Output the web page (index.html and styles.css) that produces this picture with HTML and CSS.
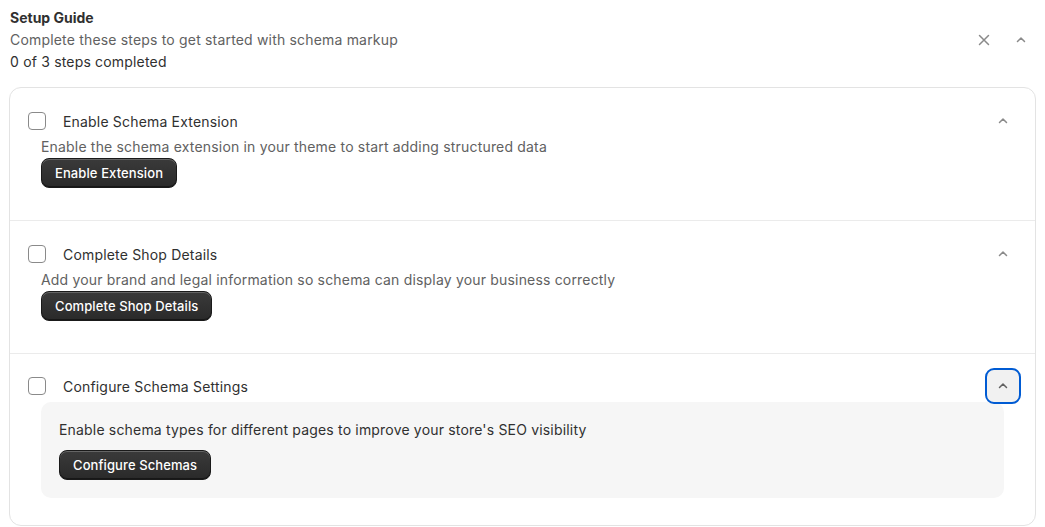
FILE: index.html
```html
<!DOCTYPE html>
<html lang="en">
<head>
    <meta charset="UTF-8">
    <meta name="viewport" content="width=device-width, initial-scale=1.0">
    <title>Setup Guide</title>
    <link rel="stylesheet" href="styles.css">
</head>
<body>
    <div class="guide">
        <div class="guide-head">
            <div class="guide-text">
                <h2 class="guide-title">Setup Guide</h2>
                <p class="guide-sub">Complete these steps to get started with schema markup</p>
                <p class="guide-progress">0 of 3 steps completed</p>
            </div>
            <div class="guide-actions">
                <button class="icon-btn" aria-label="Dismiss">
                    <svg width="20" height="20" viewBox="0 0 20 20"><path d="M5.5 5.5l9 9M14.5 5.5l-9 9" stroke="#8a8a8a" stroke-width="1.5" stroke-linecap="round"/></svg>
                </button>
                <button class="icon-btn" aria-label="Collapse">
                    <svg width="20" height="20" viewBox="0 0 20 20"><path d="M6.5 11.5L10 8l3.5 3.5" fill="none" stroke="#8a8a8a" stroke-width="1.5" stroke-linecap="round" stroke-linejoin="round"/></svg>
                </button>
            </div>
        </div>

        <div class="steps">
            <div class="step">
                <div class="step-head">
                    <span class="check"></span>
                    <span class="step-title">Enable Schema Extension</span>
                    <button class="toggle" aria-label="Collapse step">
                        <svg width="20" height="20" viewBox="0 0 20 20"><path d="M6.5 11.5L10 8l3.5 3.5" fill="none" stroke="#8a8a8a" stroke-width="1.5" stroke-linecap="round" stroke-linejoin="round"/></svg>
                    </button>
                </div>
                <div class="step-body">
                    <p class="step-desc">Enable the schema extension in your theme to start adding structured data</p>
                    <button class="btn-dark">Enable Extension</button>
                </div>
            </div>

            <div class="step">
                <div class="step-head">
                    <span class="check"></span>
                    <span class="step-title">Complete Shop Details</span>
                    <button class="toggle" aria-label="Collapse step">
                        <svg width="20" height="20" viewBox="0 0 20 20"><path d="M6.5 11.5L10 8l3.5 3.5" fill="none" stroke="#8a8a8a" stroke-width="1.5" stroke-linecap="round" stroke-linejoin="round"/></svg>
                    </button>
                </div>
                <div class="step-body">
                    <p class="step-desc">Add your brand and legal information so schema can display your business correctly</p>
                    <button class="btn-dark">Complete Shop Details</button>
                </div>
            </div>

            <div class="step step-last">
                <div class="step-head">
                    <span class="check"></span>
                    <span class="step-title">Configure Schema Settings</span>
                    <button class="toggle toggle-focus" aria-label="Collapse step">
                        <svg width="20" height="20" viewBox="0 0 20 20"><path d="M6.5 11.5L10 8l3.5 3.5" fill="none" stroke="#616161" stroke-width="1.5" stroke-linecap="round" stroke-linejoin="round"/></svg>
                    </button>
                </div>
                <div class="step-panel">
                    <p class="panel-desc">Enable schema types for different pages to improve your store's SEO visibility</p>
                    <button class="btn-dark">Configure Schemas</button>
                </div>
            </div>
        </div>
    </div>
</body>
</html>
```

FILE: styles.css
```css
body {
    margin: 0;
    padding: 7px 9px 0 9px;
    font-family: Inter, "Noto Sans", sans-serif;
    font-size: 14px;
    letter-spacing: 0.18px;
    color: #303030;
    background: #fff;
}

p, h2 {
    margin: 0;
}

button {
    font-family: inherit;
    cursor: pointer;
}

/* header above the card */
.guide-head {
    display: flex;
    justify-content: space-between;
    align-items: center;
    padding-left: 1px;
    margin-bottom: 14px;
}

.guide-title {
    font-size: 14px;
    font-weight: 650;
    line-height: 22px;
    letter-spacing: 0;
}

.guide-sub {
    color: #616161;
    line-height: 22px;
}

.guide-progress {
    line-height: 22px;
}

.guide-actions {
    display: flex;
    align-items: center;
    gap: 9px;
    margin-right: 1px;
}

.icon-btn {
    width: 28px;
    height: 28px;
    border: 0;
    background: none;
    padding: 0;
    display: flex;
    align-items: center;
    justify-content: center;
}

/* the card with the steps */
.steps {
    border: 1px solid #e3e3e3;
    border-radius: 12px;
    height: 439px;
    box-sizing: border-box;
}

.step {
    padding: 20px 14px 32px 18px;
    border-bottom: 1px solid #ebebeb;
}

.step-last {
    border-bottom: 0;
    padding-top: 19px;
}

.step-head {
    display: flex;
    align-items: center;
    height: 26px;
}

.check {
    width: 16px;
    height: 16px;
    border: 1px solid #8a8a8a;
    border-radius: 4px;
    flex: none;
}

.step-title {
    margin-left: 17px;
    flex: 1;
}

.toggle {
    width: 36px;
    height: 36px;
    border: 2px solid transparent;
    border-radius: 9px;
    background: none;
    padding: 0;
    display: flex;
    align-items: center;
    justify-content: center;
    margin: -5px 0;
}

.toggle-focus {
    border-color: #005bd3;
    background: #f1f1f1;
}

.step-body {
    padding-left: 13px;
    margin-top: 3px;
}

.step-desc {
    color: #616161;
    line-height: 20px;
    margin-bottom: 1px;
}

.step-panel {
    margin: 3px 17px 0 13px;
    background: #f6f6f6;
    border-radius: 10px;
    padding: 18px 18px 18px 18px;
}

.panel-desc {
    line-height: 20px;
    margin-bottom: 10px;
}

.btn-dark {
    height: 30px;
    padding: 0 13px;
    border: 1px solid #1a1a1a;
    border-radius: 8px;
    color: #fff;
    font-size: 13px;
    font-weight: 550;
    letter-spacing: 0.1px;
    background: linear-gradient(#3a3a3a, #2a2a2a);
    box-shadow: inset 0 1px 0 rgba(255, 255, 255, 0.22), inset 0 -1px 0 rgba(0, 0, 0, 0.45);
}
```
